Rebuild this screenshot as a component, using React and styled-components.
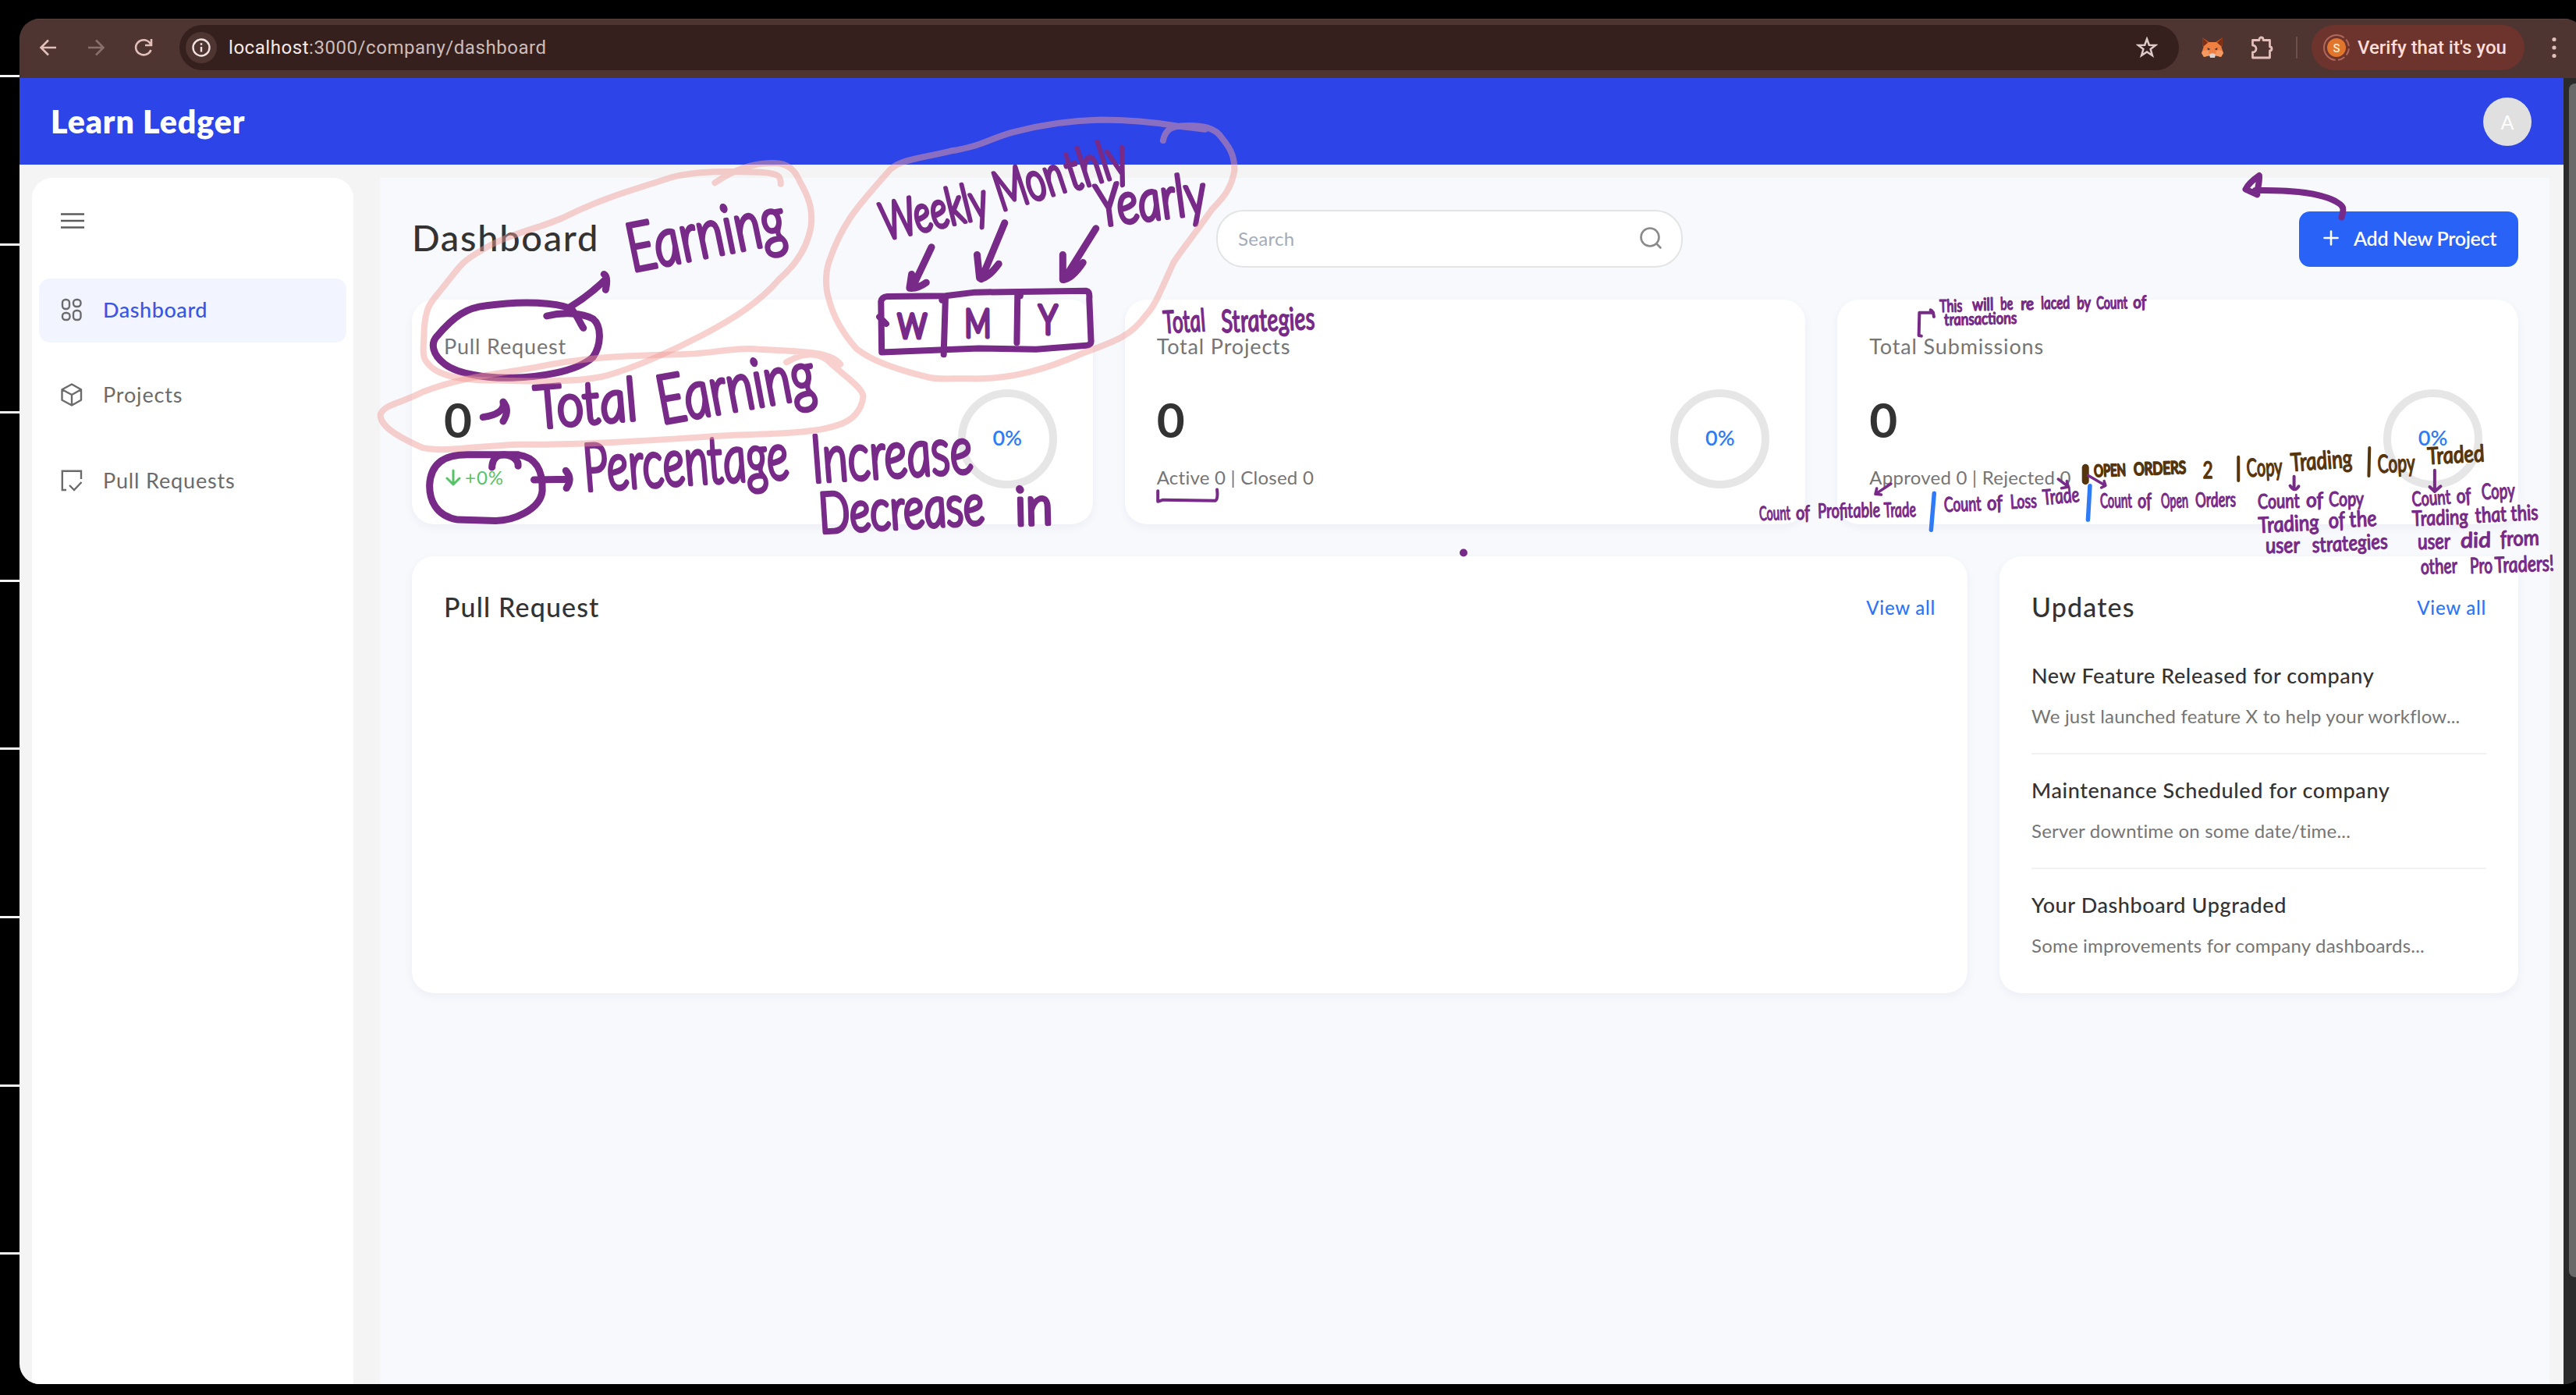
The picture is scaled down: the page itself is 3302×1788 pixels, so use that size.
import React from "react";
import styled, { createGlobalStyle } from "styled-components";

const PURPLE = "#772a87";
const BROWN = "#57350c";
const MARKER = "rgba(240, 157, 153, 0.48)";
const BLUE_PEN = "#2f7bf6";

const GlobalStyle = createGlobalStyle`
  * { box-sizing: border-box; }
  html, body { margin: 0; padding: 0; background: #000; overflow: hidden; }
  body { font-family: Lato, "Open Sans", sans-serif; color: #333; }
`;

/* ---------- frame ---------- */

const Screen = styled.div`
  position: relative;
  display: flex;
  width: 3302px;
  height: 1788px;
  overflow: hidden;
  background: #000;
`;

const Gutter = styled.div`
  flex: none;
  width: 25px;
  padding-top: 96px;
  display: flex;
  flex-direction: column;
  gap: 212.6px;
`;

const Tick = styled.div`
  flex: none;
  height: 3px;
  background: #f4f4f4;
`;

const Browser = styled.div`
  flex: none;
  width: 3288px;
  height: 1750px;
  margin-top: 24px;
  border-radius: 26px;
  overflow: hidden;
  display: flex;
  flex-direction: column;
  background: #2b2b2b;
`;

const Toolbar = styled.div`
  flex: none;
  height: 76px;
  display: flex;
  align-items: center;
  padding: 0 0 4px 23px;
  background: #4e3532;
  border-top: 1px solid #5b4340;
  font-family: Roboto, "Liberation Sans", sans-serif;
`;

const NavIcon = styled.svg`
  flex: none;
  width: 28px;
  height: 28px;
  margin-right: 33px;
  fill: none;
  stroke: ${(p) => (p.$dim ? "#8a706d" : "#e3bfba")};
  stroke-width: 2.6;
`;

const Address = styled.div`
  flex: none;
  width: 2563px;
  height: 58px;
  margin-left: -1px;
  border-radius: 29px;
  background: #35201e;
  display: flex;
  align-items: center;
  padding: 0 27px 0 8px;
`;

const InfoBadge = styled.div`
  width: 40px;
  height: 40px;
  border-radius: 50%;
  background: #4e3532;
  display: grid;
  place-items: center;
  margin-right: 15px;
`;

const Url = styled.div`
  flex: 1;
  font-size: 24px;
  line-height: 32px;
  letter-spacing: 0.55px;
  color: #cdbdba;
  b { font-weight: 400; color: #f6e9e7; }
`;

const ToolSvg = styled.svg`
  flex: none;
  margin-left: ${(p) => p.$left || 0}px;
`;

const ToolDivider = styled.div`
  width: 2px;
  height: 28px;
  margin: 0 18px 0 28px;
  background: #6d514d;
`;

const VerifyPill = styled.div`
  width: 273px;
  height: 58px;
  border-radius: 29px;
  background: #6d342d;
  display: flex;
  align-items: center;
  padding-left: 14px;
  gap: 9px;
  font-size: 24px;
  font-weight: 500;
  color: #fbdcd6;
  white-space: nowrap;
`;

const Page = styled.div`
  flex: 1;
  min-height: 0;
  display: flex;
`;

const AppShell = styled.div`
  width: 3261px;
  background: #f4f4f4;
  display: flex;
  flex-direction: column;
`;

const Track = styled.div`
  flex: 1;
  padding: 7px 0 0 7px;
  background: #2b2b2b;
`;

const Thumb = styled.div`
  height: 1530px;
  border-radius: 8px;
  background: #696969;
`;

/* ---------- app ---------- */

const AppBar = styled.header`
  flex: none;
  height: 111px;
  background: #2c44e8;
  display: flex;
  align-items: center;
  justify-content: space-between;
  padding: 0 41px 0 40px;
`;

const Brand = styled.div`
  font-size: 41px;
  line-height: 48px;
  font-weight: 800;
  letter-spacing: 0.9px;
  color: #fff;
`;

const Avatar = styled.div`
  width: 62px;
  height: 62px;
  border-radius: 50%;
  background: #e0e0e0;
  color: #fff;
  display: grid;
  place-items: center;
  font-size: 25px;
`;

const Body = styled.div`
  flex: 1;
  min-height: 0;
  display: flex;
  padding: 17px 18px 0 16px;
  gap: 34px;
`;

const Sidebar = styled.aside`
  flex: none;
  width: 412px;
  background: #fff;
  border-radius: 26px 26px 0 0;
  padding: 45px 9px 0;
`;

const MenuButton = styled.div`
  height: 83.5px;
  padding-left: 28px;
`;

const NavItem = styled.div`
  height: 82px;
  margin-bottom: 27.7px;
  border-radius: 14px;
  display: flex;
  align-items: center;
  gap: 26px;
  padding-left: 28px;
  padding-bottom: 2px;
  font-size: 27px;
  line-height: 36px;
  font-weight: ${(p) => (p.$active ? 500 : 400)};
  letter-spacing: ${(p) => (p.$active ? 0.55 : 0.85)}px;
  background: ${(p) => (p.$active ? "#f2f4ff" : "transparent")};
  color: ${(p) => (p.$active ? "#3a55e4" : "#6b6b6b")};
`;

const NavGlyph = styled.svg`
  flex: none;
  width: 28px;
  height: 30px;
  fill: none;
  stroke: #6b6b6b;
  stroke-width: 2.4;
`;

const Main = styled.main`
  flex: 1;
  background: #f8f9fd;
  padding: 41px 40px 0 41px;
  display: flex;
  flex-direction: column;
  gap: 41px;
`;

const Header = styled.div`
  height: 74px;
  display: grid;
  grid-template-columns: 1031px 598px 1fr;
  align-items: center;
`;

const PageTitle = styled.h1`
  margin: 0;
  font-size: 47px;
  line-height: 56px;
  font-weight: 500;
  letter-spacing: 1.7px;
  padding-bottom: 4px;
  color: #333;
`;

const SearchBox = styled.div`
  height: 74px;
  border: 2px solid #e3e4e4;
  border-radius: 35px;
  background: #fff;
  display: flex;
  align-items: center;
  justify-content: space-between;
  padding: 0 24px 2px 26px;
  font-size: 24px;
  letter-spacing: 0.3px;
  color: #a4abb9;
`;

const AddButton = styled.div`
  justify-self: end;
  width: 281px;
  height: 71px;
  border-radius: 14px;
  background: #2962f6;
  color: #fff;
  display: flex;
  align-items: center;
  gap: 19px;
  padding: 0 0 2px 31px;
  font-size: 25px;
  font-weight: 600;
  letter-spacing: -0.3px;
  white-space: nowrap;
`;

const surface = `
  background: #fff;
  border-radius: 28px;
  box-shadow: 0 4px 12px rgba(30, 40, 80, 0.05);
`;

const Stats = styled.div`
  display: grid;
  grid-template-columns: repeat(3, 1fr);
  gap: 41px;
`;

const StatCard = styled.section`
  ${surface}
  height: 287.5px;
  display: flex;
  justify-content: space-between;
  align-items: flex-end;
  padding: 0 46px 0 41px;
`;

const StatText = styled.div`
  align-self: flex-start;
  padding-top: 40px;
`;

const StatLabel = styled.div`
  font-size: 27px;
  line-height: 40px;
  letter-spacing: 0.85px;
  color: #757575;
`;

const StatValue = styled.div`
  margin-top: 38px;
  font-size: 62px;
  line-height: 70px;
  font-weight: 700;
  color: #333;
`;

const StatSub = styled.div`
  margin-top: 23px;
  display: flex;
  align-items: center;
  gap: 5px;
  font-size: 24px;
  line-height: 34px;
  letter-spacing: ${(p) => (p.$up ? 1 : 0.25)}px;
  color: ${(p) => (p.$up ? "#55c366" : "#757575")};
`;

const Ring = styled.div`
  width: 127px;
  height: 127px;
  margin-bottom: 46px;
  padding-bottom: 3px;
  border: 10px solid #e6e6e6;
  border-radius: 50%;
  display: grid;
  place-items: center;
  font-size: 27px;
  font-weight: 600;
  color: #2f7bf6;
`;

const Panels = styled.div`
  display: flex;
  gap: 41px;
`;

const Panel = styled.section`
  ${surface}
  width: ${(p) => p.$width}px;
  height: 560px;
  padding: 41px 41px 0;
`;

const PanelHead = styled.div`
  height: 48px;
  margin-bottom: 18px;
  display: flex;
  align-items: center;
  justify-content: space-between;
`;

const PanelTitle = styled.h2`
  margin: 0;
  font-size: 34px;
  line-height: 48px;
  font-weight: 500;
  letter-spacing: 1.15px;
  color: #333;
`;

const ViewAll = styled.a`
  padding-top: 3px;
  font-size: 24px;
  line-height: 34px;
  font-weight: 500;
  letter-spacing: 0.75px;
  color: #2f73f6;
`;

const Update = styled.article`
  height: 147px;
  padding-top: 28px;
  border-bottom: ${(p) => (p.$last ? "none" : "2px solid #f1f2f2")};
`;

const UpdateTitle = styled.div`
  font-size: 27px;
  line-height: 36px;
  font-weight: 500;
  letter-spacing: 0.6px;
  color: #333;
`;

const UpdateText = styled.div`
  margin-top: 17px;
  font-size: 24px;
  line-height: 34px;
  letter-spacing: 0.2px;
  color: #757575;
`;

/* ---------- annotations ---------- */

const InkLayer = styled.svg`
  position: absolute;
  inset: 0;
  width: 3302px;
  height: 1788px;
  pointer-events: none;
  fill: none;
  stroke-linecap: round;
  stroke-linejoin: round;
`;

const Stroke = styled.path`
  vector-effect: non-scaling-stroke;
  stroke: ${(p) => p.$color || PURPLE};
  stroke-width: ${(p) => p.$w || 9}px;
`;

const InkText = styled.text`
  font-family: Lato, "Open Sans", sans-serif;
  font-size: ${(p) => p.$size}px;
  font-style: italic;
  font-weight: ${(p) => (p.$size > 40 ? 300 : 400)};
  fill: ${(p) => p.$color};
  stroke: ${(p) => p.$color};
  stroke-width: ${(p) => p.$sw}px;
`;

const notes = [
  ["Earning", 812, 348, 205, 86, -11, 5],
  ["Total", 690, 549, 131, 76, -5, 5],
  ["Earning", 850, 543, 204, 86, -10, 5],
  ["Percentage", 752, 629, 263, 84, -3.5, 5],
  ["Increase", 1044, 618, 207, 84, -3.5, 5],
  ["Decrease", 1053, 683, 212, 72, -3.2, 5],
  ["in", 1304, 673, 48, 68, -2, 5],
  ["Weekly", 1137, 307, 138, 66, -12.6, 5],
  ["Mon", 1285, 270, 90, 70, -17, 5],
  ["thly", 1376, 244, 80, 70, -17, 5],
  ["Yearly", 1410, 290, 142, 74, -7, 5],
  ["W", 1152, 433, 37, 43, 0, 5],
  ["M", 1238, 432, 34, 50, 0, 5],
  ["Y", 1333, 428, 24, 52, 0, 5],
  ["Total", 1493, 427, 54, 40, -3, 1.6],
  ["Strategies", 1567, 426, 120, 40, -2, 1.6],
  ["This", 2487, 400, 29, 22, -1, 1.4],
  ["will", 2529, 398, 27, 22, -1, 1.4],
  ["be", 2565, 397, 16, 22, -1, 1.4],
  ["re", 2591, 397, 17, 22, -1, 1.4],
  ["laced", 2617, 396, 37, 22, -1, 1.4],
  ["by", 2663, 396, 18, 22, -1, 1.4],
  ["Count", 2688, 396, 40, 22, -1, 1.4],
  ["of", 2735, 395, 17, 22, -1, 1.4],
  ["transactions", 2493, 417, 93, 21, -1.5, 1.4],
  ["Count", 2256, 667, 40, 25, -1.5, 1.2],
  ["of", 2303, 666, 18, 25, -1.5, 1.2],
  ["Profitable", 2331, 664, 80, 26, -1, 1.2],
  ["Trade", 2416, 663, 41, 26, -1.5, 1.2],
  ["Count", 2493, 656, 48, 26, -2, 1.2],
  ["of", 2548, 654, 20, 26, -2, 1.2],
  ["Loss", 2578, 652, 34, 25, -3, 1.2],
  ["Trade", 2620, 647, 47, 27, -5, 1.2],
  ["Count", 2693, 651, 41, 26, -1, 1.2],
  ["of", 2741, 651, 18, 26, -1, 1.2],
  ["Open", 2771, 651, 35, 26, -1, 1.2],
  ["Orders", 2815, 650, 52, 26, -1, 1.2],
  ["OPEN", 2685, 611, 41, 21, -2, 2.2, BROWN],
  ["ORDERS", 2736, 609, 67, 22, -2, 2.2, BROWN],
  ["2", 2824, 613, 14, 30, 0, 1.4, BROWN],
  ["Copy", 2881, 611, 46, 32, -2, 1.4, BROWN],
  ["Trading", 2938, 604, 79, 32, -4, 1.4, BROWN],
  ["Copy", 3049, 606, 48, 32, -2, 1.4, BROWN],
  ["Traded", 3113, 595, 73, 30, -3, 1.4, BROWN],
  ["Count", 2895, 652, 54, 26, -1.5, 1.2],
  ["of", 2957, 650, 22, 26, -1.5, 1.2],
  ["Copy", 2986, 649, 45, 26, -1, 1.2],
  ["Trading", 2896, 683, 78, 28, -3, 1.2],
  ["of the", 2986, 677, 62, 28, -3, 1.2],
  ["user", 2905, 709, 44, 28, -1, 1.2],
  ["strategies", 2965, 708, 97, 27, -3, 1.2],
  ["Count", 3093, 649, 50, 26, -4, 1.2],
  ["of", 3150, 645, 19, 26, -4, 1.2],
  ["Copy", 3182, 640, 43, 28, -2, 1.2],
  ["Trading", 3093, 674, 72, 27, -2, 1.2],
  ["that this", 3174, 670, 81, 27, -3, 1.2],
  ["user", 3100, 704, 42, 28, -1, 1.2],
  ["did", 3155, 702, 39, 27, -1, 1.2],
  ["from", 3206, 700, 50, 27, -2, 1.2],
  ["other", 3104, 736, 47, 27, -2, 1.2],
  ["Pro", 3167, 735, 29, 28, -1, 1.2],
  ["Traders!", 3199, 734, 76, 28, -2, 1.2],
];

function Annotations() {
  return (
    <InkLayer viewBox="0 0 3302 1788">
      {notes.map(([text, x, y, w, size, rot, sw, color], i) => (
        <InkText
          key={i}
          textLength={w}
          lengthAdjust="spacingAndGlyphs"
          transform={`translate(${x} ${y}) rotate(${rot}) skewX(6)`}
          $size={size}
          $sw={sw}
          $color={color || PURPLE}
        >
          {text}
        </InkText>
      ))}

      <g transform="translate(460 140) scale(0.40816 0.35714)">
        <Stroke d="M590 742C640 728 700 730 735 752C765 780 760 850 735 890C680 945 560 962 480 964C400 966 310 950 270 915C230 880 225 840 245 815C300 740 340 712 400 705C520 685 620 695 665 715C685 735 695 770 705 785" />
        <Stroke d="M660 712C700 685 740 650 775 610M770 592Q784 600 775 648" />
        <Stroke d="M418 1285C420 1250 435 1240 460 1240C485 1245 502 1260 500 1280" />
        <Stroke d="M500 1240C560 1250 578 1300 576 1370C570 1440 480 1477 430 1477L310 1473C240 1460 222 1400 222 1350C225 1270 270 1240 340 1240L500 1240" />
        <Stroke d="M550 1330L660 1328M650 1297Q672 1325 652 1360" />
        <Stroke d="M390 1105C430 1100 460 1080 453 1050Q475 1080 453 1120" />
      </g>

      <g transform="translate(1040 140) scale(0.44643 0.35714)">
        <Stroke $w={8} d="M195 745L215 770M202 872L200 690Q202 674 218 672L385 670L470 657L790 652Q800 655 798 680L803 830Q805 845 790 848L645 862L480 858L202 872" />
        <Stroke $w={8} d="M375 685L385 680L380 880M600 670L592 668L590 838" />
        <Stroke $w={9} d="M345 495L290 640M288 592L282 642Q305 645 330 622" />
        <Stroke $w={9} d="M555 408L488 610M476 522L483 606Q502 615 538 555" />
        <Stroke $w={9} d="M817 428L725 612M722 522L722 612Q748 610 780 550" />
        <Stroke $w={4} d="M995 1370L995 1408L1010 1402L1160 1405Q1168 1400 1165 1365" />
      </g>

      <g transform="translate(2230 360) scale(0.35714 0.33333)">
        <Stroke $w={4} d="M652 212L643 210L645 122L695 122M685 112Q696 118 697 138" />
        <Stroke $w={3.5} d="M543 780L490 818M492 798L487 820L508 822" />
        <Stroke $w={3.5} d="M1143 762L1178 790M1174 770L1180 792L1155 797" />
        <Stroke $w={9} $color={BROWN} d="M1241 718L1241 770" />
        <Stroke $w={5.5} $color={BLUE_PEN} d="M698 817L687 958M1257 788L1250 918" />
        <Stroke $w={3.5} d="M1250 748L1310 785M1308 770L1313 787L1298 795" />
      </g>

      <g transform="translate(2640 480) scale(0.42218 0.33333)">
        <Stroke $w={4} $color={BROWN} d="M543 317L543 408M941 282L939 390" />
        <Stroke $w={4} d="M712 392L712 438M700 428Q714 455 726 430" />
        <Stroke $w={4} d="M1139 368L1139 445M1124 432L1139 450L1157 430" />
      </g>

      <g transform="translate(2600 0) scale(0.44771 0.33333)">
        <Stroke $w={8} d="M897 835C905 800 905 790 870 768C820 737 740 730 650 732M655 748L622 728C630 705 645 690 661 675Q662 700 655 735" />
      </g>
      <ellipse cx="1876" cy="708.5" rx="5" ry="5" fill={PURPLE} />

      <g transform="translate(460 140) scale(0.40816 0.35714)">
        <Stroke
          $color={MARKER}
          $w={8}
          d="M1118 264C1180 215 1240 192 1300 193C1350 192 1370 220 1385 260C1420 330 1425 370 1420 420C1410 490 1380 550 1320 610C1260 690 1180 750 1080 810C980 870 860 930 780 955C700 980 560 978 440 973C300 975 240 950 215 910C195 890 205 840 205 790C210 700 230 690 260 645C320 560 320 550 380 510C460 450 560 430 640 390C760 320 860 290 980 245C1060 220 1160 222 1260 226C1320 230 1325 240 1325 268"
        />
        <Stroke
          $color={MARKER}
          $w={8}
          d="M1343 908C1400 870 1450 870 1485 915C1540 970 1580 1000 1584 1030C1580 1080 1550 1120 1500 1135C1420 1170 1200 1165 1100 1175C900 1190 700 1205 500 1203C350 1210 270 1232 200 1215C130 1180 65 1140 68 1095C80 1060 120 1060 200 1015C320 960 440 950 560 925C740 885 860 885 1000 880C1100 880 1180 852 1260 862C1400 870 1480 870 1512 915"
        />
      </g>
      <g transform="translate(1040 140) scale(0.44643 0.35714)">
        <Stroke
          $color={MARKER}
          $w={8}
          d="M1010 112C1015 85 1025 62 1060 60C1120 55 1160 65 1180 105C1210 150 1215 180 1215 220C1205 290 1180 320 1150 360C1100 450 1060 510 1040 550C1000 660 985 710 960 740C920 810 880 830 780 875C680 930 580 970 460 967C400 965 360 972 330 960C230 930 170 900 130 860C80 790 60 730 50 680C40 640 40 590 50 550C90 400 140 340 220 225C250 180 300 180 400 150C500 130 520 100 580 82C680 50 760 40 830 38C920 38 1000 50 1050 60L1130 72"
        />
      </g>
    </InkLayer>
  );
}

/* ---------- icons ---------- */

const GridIcon = () => (
  <NavGlyph viewBox="0 0 28 30">
    <rect x="2" y="2" width="9" height="12" rx="4" />
    <rect x="16" y="2" width="9.5" height="9" rx="4" />
    <rect x="2" y="19" width="9.5" height="9" rx="4" />
    <rect x="16" y="16" width="9.5" height="12" rx="4" />
  </NavGlyph>
);

const BoxIcon = () => (
  <NavGlyph viewBox="0 0 28 30" strokeLinejoin="round">
    <path d="M14 1.5L26 8.2V21.8L14 28.5L1.5 21.8V8.2ZM1.5 8.2L14 15L26 8.2M14 15V28.5" />
  </NavGlyph>
);

const RequestIcon = () => (
  <NavGlyph viewBox="0 0 28 30">
    <path d="M26 13V2.8H1.8V27H7M11 21L17 27L26.5 17" />
  </NavGlyph>
);

const FoxIcon = () => (
  <ToolSvg $left={28} width="30" height="28" viewBox="0 0 30 28">
    <path d="M2 1L11 7H19L28 1L27.500 12L22 16H8L2.500 12Z" fill="#c9501f" />
    <path d="M2 1L9 8L5 13L2.500 11ZM28 1L21 8L25 13L27.500 11Z" fill="#7a2f16" />
    <path d="M10 7H20L26 12L29 21L26 26L19 24.500H11L4 26L1 21L4 12Z" fill="#f07f42" />
    <path d="M3 18L10 17L11 24L4 26L1 21ZM27 18L20 17L19 24L26 26L29 21Z" fill="#f59a63" />
    <path d="M8.500 14L12.500 16L9 17.500ZM21.500 14L17.500 16L21 17.500Z" fill="#4a3a3a" />
    <path d="M11 23L13 21.500H17L19 23L18 27H12Z" fill="#d9d4d4" />
  </ToolSvg>
);

const PuzzleIcon = () => (
  <ToolSvg $left={34} width="30" height="30" viewBox="0 0 30 30">
    <path
      d="M2.500 5.500H11V4.500A2.500 2.500 0 0 1 16 4.500V5.500H24.500V14A2.500 2.500 0 0 1 24.500 19V28H2.500V21A4.500 4.500 0 0 0 2.500 12Z"
      fill="none"
      stroke="#e3bfba"
      strokeWidth="2.800"
      strokeLinejoin="round"
    />
  </ToolSvg>
);

const updates = [
  ["New Feature Released for company", "We just launched feature X to help your workflow..."],
  ["Maintenance Scheduled for company", "Server downtime on some date/time..."],
  ["Your Dashboard Upgraded", "Some improvements for company dashboards..."],
];

function Stat({ label, sub, up }) {
  return (
    <StatCard>
      <StatText>
        <StatLabel>{label}</StatLabel>
        <StatValue>0</StatValue>
        <StatSub $up={up}>
          {up && (
            <svg width="22" height="22" viewBox="0 0 22 22" fill="none" stroke="#55c366" strokeWidth="3" strokeLinecap="round" strokeLinejoin="round">
              <path d="M12 2V20M4 12L12 20L20 12" />
            </svg>
          )}
          {sub}
        </StatSub>
      </StatText>
      <Ring>0%</Ring>
    </StatCard>
  );
}

export default function App() {
  return (
    <Screen>
      <GlobalStyle />
      <Gutter>
        {Array.from({ length: 8 }, (_, i) => (
          <Tick key={i} />
        ))}
      </Gutter>
      <Browser>
        <Toolbar>
          <NavIcon viewBox="0 0 28 28">
            <path d="M24 14H5M14 4.500L4.500 14L14 23.500" />
          </NavIcon>
          <NavIcon viewBox="0 0 28 28" $dim>
            <path d="M4 14H23M14 4.500L23.500 14L14 23.500" />
          </NavIcon>
          <NavIcon viewBox="0 0 28 28">
            <path d="M23.500 17A10 9.500 0 1 1 22 8L24 10.500M24 3V11H16" />
          </NavIcon>
          <Address>
            <InfoBadge>
              <svg width="26" height="26" viewBox="0 0 26 26" fill="none" stroke="#f3e3e0" strokeWidth="2.400">
                <circle cx="13" cy="13" r="10.500" />
                <path d="M13 12V18.500M13 7.200V9.800" />
              </svg>
            </InfoBadge>
            <Url>
              <b>localhost</b>:3000/company/dashboard
            </Url>
            <ToolSvg width="28" height="28" viewBox="0 0 28 28">
              <path d="M14 3L16.800 10.700L25 11L18.600 16L20.900 24L14 19.400L7.100 24L9.400 16L3 11L11.200 10.700Z" fill="none" stroke="#dccbc8" strokeWidth="2.500" />
            </ToolSvg>
          </Address>
          <FoxIcon />
          <PuzzleIcon />
          <ToolDivider />
          <VerifyPill>
            <svg width="36" height="36" viewBox="0 0 36 36">
              <circle cx="18" cy="18" r="16" fill="none" stroke="#b0685c" strokeWidth="2" strokeDasharray="9 3.500 9 3.500 9 3.500 9 3.500 50" transform="rotate(-85 18 18)" />
              <circle cx="18" cy="18" r="12" fill="#e0752b" />
              <text x="18" y="23.500" textAnchor="middle" fontSize="15" fontFamily="Roboto, sans-serif" fill="#fde9d0">S</text>
            </svg>
            Verify that it's you
          </VerifyPill>
          <ToolSvg $left={34} width="8" height="28" viewBox="0 0 8 28" fill="#e3bfba">
            <circle cx="4" cy="3.500" r="2.600" />
            <circle cx="4" cy="14" r="2.600" />
            <circle cx="4" cy="24.500" r="2.600" />
          </ToolSvg>
        </Toolbar>
        <Page>
          <AppShell>
            <AppBar>
              <Brand>Learn Ledger</Brand>
              <Avatar>A</Avatar>
            </AppBar>
            <Body>
              <Sidebar>
                <MenuButton>
                  <svg width="30" height="20" viewBox="0 0 30 20" stroke="#5c5c5c" strokeWidth="2.600">
                    <path d="M0 1.500H30M0 10H30M0 18.500H30" />
                  </svg>
                </MenuButton>
                <NavItem $active>
                  <GridIcon />
                  Dashboard
                </NavItem>
                <NavItem>
                  <BoxIcon />
                  Projects
                </NavItem>
                <NavItem>
                  <RequestIcon />
                  Pull Requests
                </NavItem>
              </Sidebar>
              <Main>
                <Header>
                  <PageTitle>Dashboard</PageTitle>
                  <SearchBox>
                    Search
                    <svg width="30" height="30" viewBox="0 0 30 30" fill="none" stroke="#8a8a8a" strokeWidth="2.600" strokeLinecap="round">
                      <circle cx="14" cy="14" r="11.500" />
                      <path d="M22.500 22.500L27.500 27.500" />
                    </svg>
                  </SearchBox>
                  <AddButton>
                    <svg width="20" height="20" viewBox="0 0 20 20" fill="none" stroke="#fff" strokeWidth="2.600" strokeLinecap="round">
                      <path d="M10 1.500V18.500M1.500 10H18.500" />
                    </svg>
                    Add New Project
                  </AddButton>
                </Header>
                <Stats>
                  <Stat label="Pull Request" sub="+0%" up />
                  <Stat label="Total Projects" sub="Active 0 | Closed 0" />
                  <Stat label="Total Submissions" sub="Approved 0 | Rejected 0" />
                </Stats>
                <Panels>
                  <Panel $width={1994}>
                    <PanelHead>
                      <PanelTitle>Pull Request</PanelTitle>
                      <ViewAll>View all</ViewAll>
                    </PanelHead>
                  </Panel>
                  <Panel $width={665}>
                    <PanelHead>
                      <PanelTitle>Updates</PanelTitle>
                      <ViewAll>View all</ViewAll>
                    </PanelHead>
                    {updates.map(([title, text], i) => (
                      <Update key={title} $last={i === updates.length - 1}>
                        <UpdateTitle>{title}</UpdateTitle>
                        <UpdateText>{text}</UpdateText>
                      </Update>
                    ))}
                  </Panel>
                </Panels>
              </Main>
            </Body>
          </AppShell>
          <Track>
            <Thumb />
          </Track>
        </Page>
      </Browser>
      <Annotations />
    </Screen>
  );
}
